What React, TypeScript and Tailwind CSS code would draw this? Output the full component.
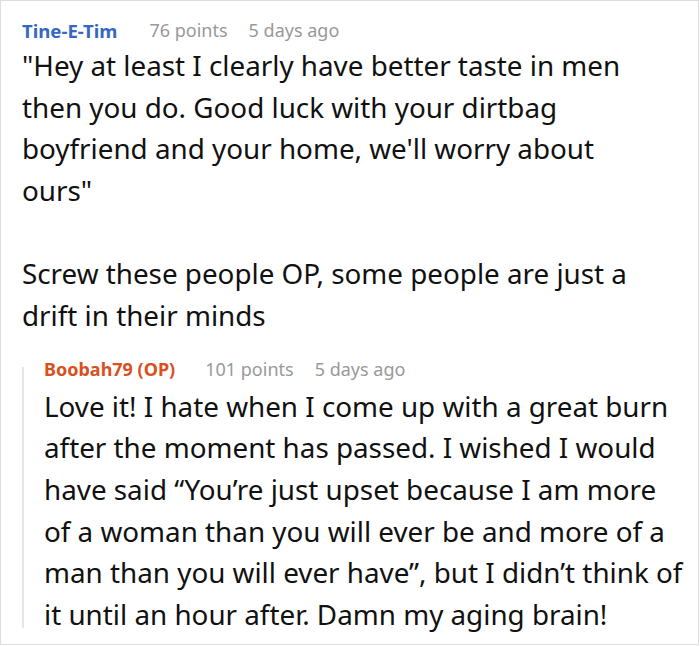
export default function App() {
    return (
        <div className="w-[699px] h-[645px] border border-[#dddddd] bg-white overflow-hidden font-['Noto_Sans',sans-serif]">
            {/* 원 댓글 */}
            <div className="pl-[21px] pr-[50px] pt-[15px]">
                <div className="flex items-center h-[29px] text-[18px] leading-[29px] whitespace-nowrap">
                    <span className="font-bold text-[18.6px] text-[#3568c2]">Tine-E-Tim</span>
                    <span className="ml-[32px] text-[#999999]">76 points</span>
                    <span className="ml-[21px] text-[#999999]">5 days ago</span>
                </div>
                <div className="text-[27.8px] leading-[41.67px] text-[#111111]">
                    <p>"Hey at least I clearly have better taste in men then you do. Good luck with your dirtbag boyfriend and your home, we'll worry about ours"</p>
                    <p className="mt-[41.67px]">Screw these people OP, some people are just a drift in their minds</p>
                </div>
            </div>

            {/* 답글 */}
            <div className="flex ml-[21px] mt-[22px]">
                <div className="w-[2px] shrink-0 my-[8px] bg-[#e6e6e6]" />
                <div className="pl-[20px] pr-[9px]">
                    <div className="flex items-center h-[20px] text-[18px] leading-[20px] whitespace-nowrap">
                        <span className="font-bold text-[#d9501e]">Boobah79 (OP)</span>
                        <span className="ml-[30px] text-[#999999]">101 points</span>
                        <span className="ml-[21px] text-[#999999]">5 days ago</span>
                    </div>
                    <p className="mt-[7px] text-[27.8px] leading-[41.67px] text-[#111111]">
                        Love it! I hate when I come up with a great burn after the moment has passed. I wished I would have said “You’re just upset because I am more of a woman than you will ever be and more of a man than you will ever have”, but I didn’t think of it until an hour after. Damn my aging brain!
                    </p>
                </div>
            </div>
        </div>
    );
}
